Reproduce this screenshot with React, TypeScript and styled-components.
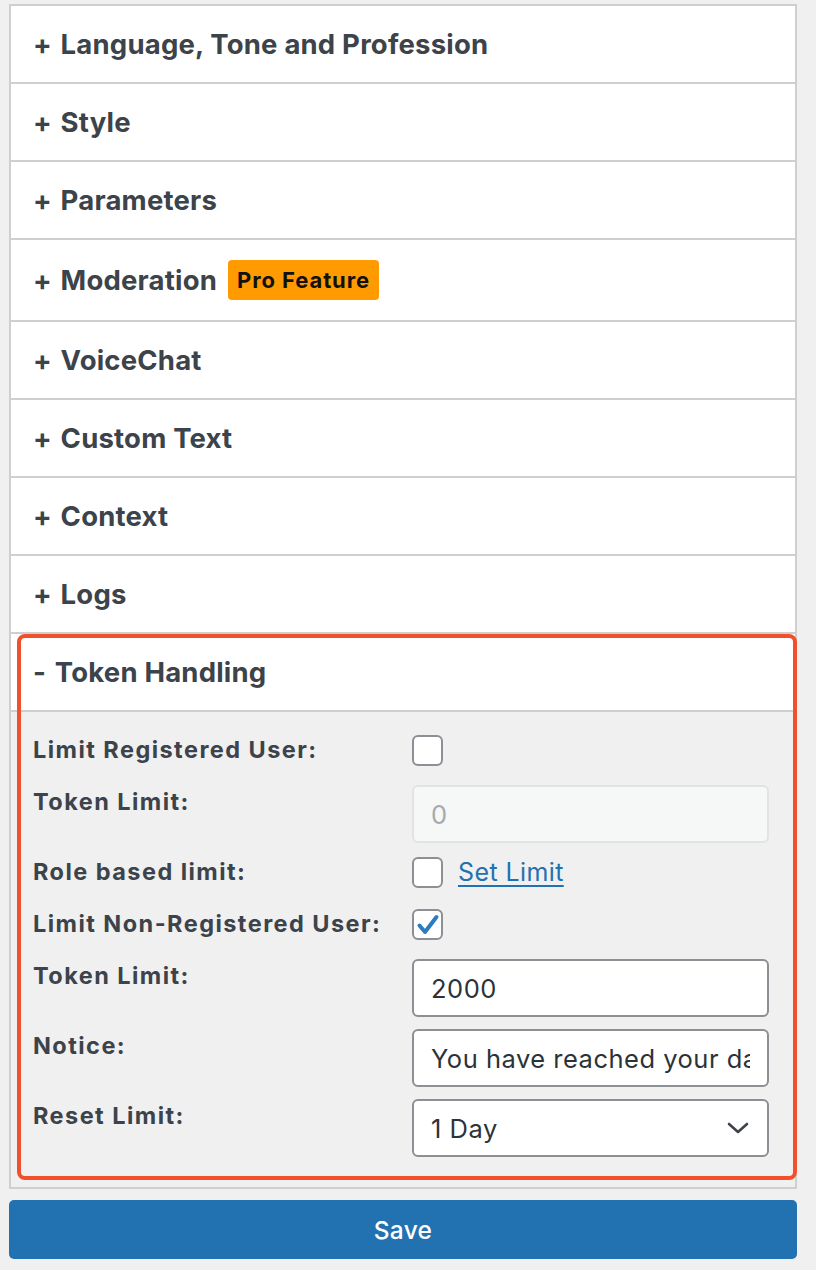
import React from "react";
import styled, { createGlobalStyle } from "styled-components";

const GlobalStyle = createGlobalStyle`
  html, body {
    margin: 0;
    padding: 0;
    background: #f0f0f1;
  }
  body {
    font-family: Inter, "Noto Sans", "Liberation Sans", sans-serif;
    color: #3c434a;
  }
  * { box-sizing: border-box; }
`;

const Page = styled.div`
  padding: 4px 19px 0 9px;
  width: 816px;
`;

const Panel = styled.div`
  border: 2px solid #cfcfcf;
  background: #ffffff;
  display: flex;
  flex-direction: column;
`;

const Header = styled.div`
  display: flex;
  align-items: center;
  gap: 11px;
  min-height: 76px;
  padding: 20px 22px;
  border-bottom: 2px solid #cfcfcf;
  background: #ffffff;
  font-size: 27.5px;
  font-weight: 700;
  line-height: 36px;
  color: #3c434a;
  letter-spacing: 0.2px;
  white-space: nowrap;
`;

const Sign = styled.span`
  display: inline-block;
  margin-right: 2px;
`;

const Badge = styled.span`
  display: inline-flex;
  align-items: center;
  height: 40px;
  padding: 0 9px;
  background: #ff9a00;
  color: #111111;
  border-radius: 4px;
  font-size: 22px;
  font-weight: 700;
  letter-spacing: 0.9px;
`;

const Section = styled.div`
  position: relative;
`;

const Highlight = styled.div`
  position: absolute;
  left: 6px;
  right: -2px;
  top: 0;
  bottom: 7px;
  border: 4px solid #f34f2b;
  border-radius: 8px;
  pointer-events: none;
`;

const Body = styled.div`
  background: #f0f0f0;
  padding: 21px 26px 30px 22px;
  display: flex;
  flex-direction: column;
  gap: 12px;
`;

const Row = styled.div<{ $check?: boolean }>`
  display: grid;
  grid-template-columns: 379px 357px;
  align-items: start;
  min-height: ${(p) => (p.$check ? "40px" : "58px")};
`;

const Label = styled.div`
  font-size: 23.5px;
  font-weight: 700;
  line-height: 34px;
  letter-spacing: 1.45px;
  color: #3c434a;
  white-space: nowrap;
`;

const Controls = styled.div`
  display: flex;
  align-items: center;
  gap: 15px;
  padding-top: 2px;
`;

const Box = styled.div`
  width: 31px;
  height: 31px;
  border: 2px solid #8c8f94;
  border-radius: 6px;
  background: #ffffff;
  display: flex;
  align-items: center;
  justify-content: center;
`;

const Link = styled.a`
  color: #2271b1;
  font-size: 25px;
  line-height: 31px;
  letter-spacing: 0.4px;
  text-decoration: underline;
  text-decoration-thickness: 1.5px;
  text-underline-offset: 4px;
`;

const Field = styled.input<{ $disabled?: boolean }>`
  width: 357px;
  height: 58px;
  border: 2px solid ${(p) => (p.$disabled ? "#e2e3e4" : "#8c8f94")};
  border-radius: 6px;
  background: ${(p) => (p.$disabled ? "#f6f7f7" : "#ffffff")};
  color: ${(p) => (p.$disabled ? "#a7aaad" : "#2c3338")};
  font-family: Inter, "Noto Sans", "Liberation Sans", sans-serif;
  font-size: 25.5px;
  letter-spacing: 0.5px;
  padding: 0 17px;
  outline: none;
`;

const Select = styled.div`
  width: 357px;
  height: 58px;
  border: 2px solid #8c8f94;
  border-radius: 6px;
  background: #ffffff;
  color: #2c3338;
  font-size: 25.5px;
  letter-spacing: 0.5px;
  padding: 0 18px 0 17px;
  display: flex;
  align-items: center;
  justify-content: space-between;
`;

const SaveButton = styled.button`
  margin-top: 11px;
  width: 100%;
  height: 59px;
  border: none;
  border-radius: 5px;
  background: #2271b1;
  color: #ffffff;
  font-family: Inter, "Noto Sans", "Liberation Sans", sans-serif;
  font-size: 24.5px;
  font-weight: 500;
  letter-spacing: 0.3px;
  cursor: pointer;
`;

const Checkbox = ({ checked }: { checked?: boolean }) => (
  <Box>
    {checked && (
      <svg width="24" height="22" viewBox="0 0 24 22">
        <path
          d="M3.5 11.5 L9 18 L20.5 3"
          fill="none"
          stroke="#2d7cc0"
          strokeWidth="4"
          strokeLinecap="round"
          strokeLinejoin="round"
        />
      </svg>
    )}
  </Box>
);

const sections = [
  "Language, Tone and Profession",
  "Style",
  "Parameters",
  "Moderation",
  "VoiceChat",
  "Custom Text",
  "Context",
  "Logs",
];

export default function App() {
  return (
    <>
      <GlobalStyle />
      <Page>
        <Panel>
          {sections.map((s) => (
            <Header key={s}>
              <span>
                <Sign>+</Sign> {s}
              </span>
              {s === "Moderation" && <Badge>Pro Feature</Badge>}
            </Header>
          ))}
          <Section>
            <Header>
              <span>
                <Sign>-</Sign> Token Handling
              </span>
            </Header>
            <Body>
              <Row $check>
                <Label>Limit Registered User:</Label>
                <Controls>
                  <Checkbox />
                </Controls>
              </Row>
              <Row>
                <Label>Token Limit:</Label>
                <Field $disabled value="0" readOnly />
              </Row>
              <Row $check>
                <Label>Role based limit:</Label>
                <Controls>
                  <Checkbox />
                  <Link href="#">Set Limit</Link>
                </Controls>
              </Row>
              <Row $check>
                <Label>Limit Non-Registered User:</Label>
                <Controls>
                  <Checkbox checked />
                </Controls>
              </Row>
              <Row>
                <Label>Token Limit:</Label>
                <Field value="2000" readOnly />
              </Row>
              <Row>
                <Label>Notice:</Label>
                <Field value="You have reached your daily limit" readOnly />
              </Row>
              <Row>
                <Label>Reset Limit:</Label>
                <Select>
                  <span>1 Day</span>
                  <svg width="22" height="12" viewBox="0 0 22 12">
                    <path
                      d="M2 2 L11 10 L20 2"
                      fill="none"
                      stroke="#3c434a"
                      strokeWidth="2.6"
                      strokeLinecap="round"
                      strokeLinejoin="round"
                    />
                  </svg>
                </Select>
              </Row>
            </Body>
            <Highlight />
          </Section>
        </Panel>
        <SaveButton>Save</SaveButton>
      </Page>
    </>
  );
}
